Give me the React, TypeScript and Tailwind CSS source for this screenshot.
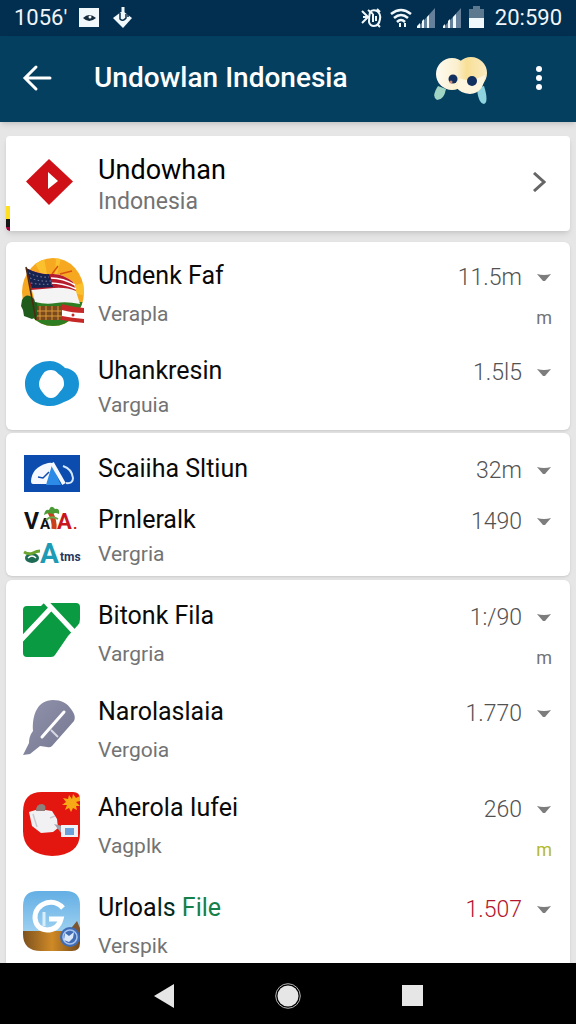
import type { ReactNode } from "react";
import clsx from "clsx";

const ICON = "block w-16 h-[68px] overflow-visible";

function FlagLogo() {
  return (
    <svg viewBox="22 260 64 68" className={ICON} aria-hidden="true">
      <defs>
        <clipPath id="flag-disc">
          <ellipse cx="53" cy="292" rx="31" ry="34" />
        </clipPath>
      </defs>
      <g clipPath="url(#flag-disc)">
        <rect x="20" y="256" width="68" height="72" fill="#f6a821" />
        <path d="M50 290 32 258h12zM54 288l2-30 5 0zM60 290l26-8v14z" fill="#fbc02d" />
        <path d="M52 274l6-8M60 274l12-3" stroke="#d9540f" strokeWidth="1.5" />
        <path d="M20 302h68v26H20z" fill="#2e7d22" />
        <path d="M36 306h26v14H36z" fill="#7a4a1c" />
      </g>
      <path d="M22 300q3-6 8-4l7 5 1 15-6 3-8-3-1-6-2-4z" fill="#1f5c1b" />
      <path d="M37 311h25M37 316h25M40 306v14M46 306v14M52 306v14M58 306v14" stroke="#d99a3a" />
      <path d="M26 268q14 7 25 6t22 8l7 22q-14-3-24-1t-21-1z" fill="#f4f4f4" />
      <path d="M26 268q14 7 25 6t22 8l3 9q-10-4-22-3t-23 2z" fill="#b71c2c" />
      <path d="M51 278q12 0 24 7M50 283q13 0 26 6" stroke="#fff" strokeWidth="1.5" fill="none" />
      <path d="M26 268q13 7 23 6l4 13q-12 1-21 1z" fill="#18224f" />
      <path d="M29 273q10 5 20 4M30 278q10 4 21 3M31 283q10 2 21 1" stroke="#8d93b5" strokeDasharray="1.5 2.5" fill="none" />
      <path d="M26 267l10 53" stroke="#4e2a12" strokeWidth="1.5" />
      <path d="M61 304q12 3 23 4v15q-12-1-22-3z" fill="#c62828" />
      <path d="M62 310q10 3 22 3v6q-12-1-22-3z" fill="#fff" />
      <circle cx="73" cy="315" r="1.5" fill="#c62828" />
    </svg>
  );
}

function RingLogo() {
  return (
    <svg viewBox="22 355 64 68" className={ICON} aria-hidden="true">
      <path
        d="M50 361c6 0 11 3 15 7 9 1 14 7 14 16 0 10-6 15-15 18-4 2-8 4-14 4-15 0-25-10-25-22s10-23 25-23z"
        fill="#1793d5"
      />
      <path d="M51 370c5 0 6 3 9 5s4 5 4 9-3 6-5 9-5 5-8 5-6-2-8-5-4-5-4-9 2-7 4-10 4-4 8-4z" fill="#fff" />
    </svg>
  );
}

function StackedLogos() {
  return (
    <svg viewBox="22 453 64 115" className="block w-16 h-[115px] overflow-visible font-[Roboto,sans-serif] font-bold" aria-hidden="true">
      <rect x="24" y="455" width="56" height="37" fill="#0b4cae" />
      <path d="M31 481q1-14 17-18 4-1 5 1l-6 20H33q-2 0-2-3z" fill="#f5f9ff" />
      <path d="M52 465l9 20H46z" fill="#2d8be8" />
      <path d="M52 463l12 21" stroke="#f5f9ff" strokeWidth="4" />
      <path d="M63 466q9 3 10 12 0 6-7 5" stroke="#d5e8fd" strokeWidth="2" fill="none" />
      <path d="M38 477l5 1 6-6" stroke="#0b4cae" strokeWidth="1.5" fill="none" />
      <text x="24" y="529" fontSize="23" fill="#111">V</text>
      <text x="40" y="529" fontSize="15" fill="#111">A</text>
      <text x="57" y="529" fontSize="22" fill="#c9151e">A</text>
      <text x="73" y="529" fontSize="15" fill="#c9151e">.</text>
      <path d="M50 512q5 9 4 17" stroke="#c9401c" strokeWidth="5" fill="none" />
      <path d="M44 515q1-6 5-5 2-6 6-1 5-1 4 5-4-2-6 0-5-2-9 1z" fill="#4a9a35" />
      <path d="M46 520q5-5 12-1" stroke="#6aa84a" strokeWidth="2" fill="none" />
      <ellipse cx="32" cy="558" rx="7" ry="5" fill="#1d6a55" />
      <path d="M24 552q5 3 9 1t7-2" stroke="#6aa32e" strokeWidth="3" fill="none" />
      <path d="M28 558q4-4 8 0" stroke="#fff" strokeWidth="1.5" fill="none" />
      <text x="40" y="563" fontSize="28" fill="#1d9bb5">A</text>
      <text x="60" y="561" fontSize="12" fill="#24365c">tms</text>
    </svg>
  );
}

function GreenLogo() {
  return (
    <svg viewBox="22 599 64 68" className={ICON} aria-hidden="true">
      <path d="M27 605h14l3-3h32q4 0 4 4v12q0 4-2 6l-10 11-13 19q-1 2-4 2H27q-4 0-4-4v-43q0-4 4-4z" fill="#0a9a41" />
      <path d="M21 639l31-33M45 600l30 32" stroke="#fff" strokeWidth="5" />
    </svg>
  );
}

function QuillLogo() {
  return (
    <svg viewBox="22 696 64 68" className={ICON} aria-hidden="true">
      <defs>
        <linearGradient id="quill" x1="0" y1="0" x2="1" y2="1">
          <stop offset="0" stopColor="#9293ae" />
          <stop offset="1" stopColor="#74778f" />
        </linearGradient>
      </defs>
      <path d="M53 700c8 0 14 3 18 9 3 4 5 8 3 12L52 746q-2 2-5 1l-7-1-10 8-7 1 6-12q0-7 4-12c-1-17 5-31 20-31z" fill="url(#quill)" />
      <path d="M42 737l22-25" stroke="#fff" strokeWidth="3" strokeLinecap="round" />
      <path d="M51 730l7 7" stroke="#d7d8e2" strokeWidth="2" />
    </svg>
  );
}

function RedLogo() {
  return (
    <svg viewBox="22 792 64 68" className={ICON} aria-hidden="true">
      <path d="M42 792h31q7 0 7 7v34q0 22-28 23-29-2-29-25v-19q0-20 19-20z" fill="#e3170f" />
      <path d="M69 795l3 4 1-5 3 4 4-2v5l-4 1 4 4h-4l1 4-4-2-2 4-2-4-4 2 2-5-5 0 4-3-3-4 5 1z" fill="#f7a916" />
      <path d="M29 812l10-3 13 2 5 8 1 9-5 4-12 1-9-7z" fill="#f1f1f4" />
      <path d="M36 811q0-7 6-7 5 1 3 7z" fill="#8d7f7c" />
      <path d="M33 814l4 13M50 818l5-2" stroke="#c9c9d1" strokeWidth="1.5" />
      <path d="M54 824l8 2v8z" fill="#9ea3ad" />
      <rect x="61" y="825" width="17" height="12" fill="#eef1f5" />
      <path d="M65 828h9v7h-9z" fill="#6ba0d8" />
    </svg>
  );
}

function GLogo() {
  return (
    <svg viewBox="22 893 64 68" className={ICON} aria-hidden="true">
      <defs>
        <linearGradient id="g-sky" x1="0" y1="0" x2="0" y2="1">
          <stop offset="0" stopColor="#62aee4" />
          <stop offset="1" stopColor="#9dd0f1" />
        </linearGradient>
        <linearGradient id="g-soil" x1="0" y1="0" x2="1" y2="0">
          <stop offset="0" stopColor="#7a4f1e" />
          <stop offset="0.5" stopColor="#cf8a26" />
          <stop offset="1" stopColor="#6e451a" />
        </linearGradient>
        <clipPath id="g-tile">
          <path d="M38 892h28q14 0 14 14v38q0 8-8 8H41q-18 0-18-17v-28q0-15 15-15z" />
        </clipPath>
      </defs>
      <g clipPath="url(#g-tile)">
        <rect x="22" y="891" width="60" height="42" fill="url(#g-sky)" />
        <rect x="22" y="932" width="60" height="22" fill="url(#g-soil)" />
        <path d="M68 933l9-11 5 12z" fill="#7d5530" />
      </g>
      <path d="M63 909q-7-8-17-5-11 4-11 15 1 11 12 12 11 0 14-11H49" stroke="#fff" strokeWidth="5" fill="none" />
      <path d="M44 913v14" stroke="#d9eefb" strokeWidth="3" />
      <circle cx="70" cy="938" r="10" fill="#3f6cb5" />
      <circle cx="70" cy="938" r="7" fill="none" stroke="#a9c5ee" strokeWidth="1.5" />
      <path d="M65 934l4 3 5-4-1 6-4 4-5-2z" fill="#dbe8fa" />
    </svg>
  );
}

function Caret({ label }: { label: string }) {
  return (
    <button type="button" aria-label={`Details for ${label}`} className="ml-3 flex h-8 w-5 items-center justify-center pt-1">
      <svg viewBox="0 0 16 10" className="h-2.5 w-4" aria-hidden="true">
        <path d="M1 1q7 2 14 0L9 8H7z" fill="#7d7d7d" />
      </svg>
    </button>
  );
}

type RowProps = {
  title: ReactNode;
  name: string;
  value: string;
  subtitle?: string;
  note?: string;
  noteClass?: string;
  valueClass?: string;
  tight?: boolean;
};

function Row({ title, name, value, subtitle, note, noteClass = "text-neutral-500", valueClass = "text-neutral-600", tight }: RowProps) {
  return (
    <div className="min-w-0 flex-1">
      <div className="flex items-center">
        <h2 className="min-w-0 flex-1 truncate text-[25px] leading-8 text-neutral-950">{title}</h2>
        <span className={clsx("pt-1 text-[23px] leading-7 font-light", valueClass)}>{value}</span>
        <Caret label={name} />
      </div>
      {subtitle && (
        <div className={clsx("flex justify-between", tight ? "mt-1" : "mt-2")}>
          <p className="text-[21px] leading-7 text-neutral-500">{subtitle}</p>
          {note && <span className={clsx("pt-2 pr-0.5 text-lg leading-5", noteClass)}>{note}</span>}
        </div>
      )}
    </div>
  );
}

const CARD = "rounded-md bg-white pl-4 pr-4 shadow-sm";
const LINE = "flex items-start gap-3";

function StatusBar() {
  return (
    <div className="flex h-9 items-center bg-[#022f4f] px-3.5 text-[22px] leading-8 text-slate-100">
      <span>1056′</span>
      <svg viewBox="80 6 54 22" className="ml-3 h-[22px] w-[54px]" aria-hidden="true">
        <rect x="80" y="7" width="20" height="19" fill="#f1f8fc" />
        <path d="M84 17q6-6 13 0-7 6-13 0z" fill="#132a3a" />
        <circle cx="91" cy="16" r="1.5" fill="#f1f8fc" />
        <path d="M114 17l8-6h3l8 6-9 10z" fill="#f1f8fc" />
        <path d="M124 5v14" stroke="#f1f8fc" strokeWidth="3" />
        <path d="M121 12v6q3 3 6-1v-4M129 12v4" stroke="#0a2d49" strokeWidth="1.5" fill="none" />
      </svg>
      <div className="flex-1" />
      <svg viewBox="361 4 124 24" className="mr-2.5 h-6 w-[124px]" aria-hidden="true">
        <g stroke="#f1f8fc" fill="none" strokeWidth="2">
          <path d="M362 9l6 6M368 15l-6 6M363 15h6" />
          <path d="M370 10q3-3 7-1 4 3 3 8-1 7-6 7-4 0-5-4 0-6 1-10zM368 8l5 4M377 7l3 3M373 12v8M376 14v5M377 22l3 3" />
          <path d="M391 12q10-8 20 0M394 16q7-6 14 0M397 20q4-4 8 0" strokeWidth="2.5" />
          <path d="M400 21v4M405 21v4" />
        </g>
        <path d="M435 6v20h-18z" fill="#64809a" />
        <path d="M417 26v-2l3-3v5zM422 26v-7l2-2v9zM427 26V15l2-2v13z" fill="#f1f8fc" />
        <path d="M461 6v20h-18z" fill="#64809a" />
        <path d="M443 26v-2l2-2v4zM448 26v-7l2-2v9zM453 26V15l3-3v14z" fill="#f1f8fc" />
        <path d="M469 7h4V4h7v3h4v10h-15z" fill="#5c7990" />
        <path d="M469 16h15v10h-15z" fill="#f1f8fc" />
      </svg>
      <span>20:590</span>
    </div>
  );
}

function AppBar() {
  return (
    <header className="relative z-10 flex h-[86px] items-center bg-[#053f60] pb-0.5 pl-5 pr-7 text-white shadow-md">
      <button type="button" aria-label="Back" className="flex h-12 w-9 items-center">
        <svg viewBox="0 0 32 28" className="h-7 w-8" fill="none" stroke="currentColor" strokeWidth="3" aria-hidden="true">
          <path d="M30 14H6M16 3L5 14l11 11" strokeLinecap="round" />
        </svg>
      </button>
      <h1 className="ml-[38px] min-w-0 flex-1 truncate text-[28px] leading-9 font-medium">Undowlan Indonesia</h1>
      <svg viewBox="432 52 56 52" className="mr-[42px] h-[52px] w-14" aria-hidden="true">
        <defs>
          <linearGradient id="eyes" gradientUnits="userSpaceOnUse" x1="436" y1="0" x2="487" y2="0">
            <stop offset="0" stopColor="#fdfaf0" />
            <stop offset="0.4" stopColor="#fbf0cf" />
            <stop offset="0.6" stopColor="#f8df96" />
            <stop offset="1" stopColor="#f9ebc0" />
          </linearGradient>
        </defs>
        <path d="M438 86l8 3q-2 11-9 11-6-3 1-14z" fill="#9fd3c3" />
        <path d="M477 88l7-2q5 16 0 18-6-1-7-16z" fill="#8ed4de" />
        <circle cx="452" cy="74" r="16" fill="url(#eyes)" />
        <circle cx="471" cy="73" r="16" fill="url(#eyes)" />
        <path d="M459 78q11 5 26-3-1 18-15 19-10-1-13-6z" fill="#fdf5de" />
        <circle cx="453" cy="79" r="4.5" fill="#11305f" />
        <circle cx="472" cy="81" r="5" fill="#11305f" />
        <circle cx="451" cy="82" r="1.5" fill="#c98a7c" />
      </svg>
      <button type="button" aria-label="More options" className="flex h-12 w-[18px] items-center justify-center">
        <svg viewBox="0 0 6 26" className="h-[26px] w-1.5 overflow-visible" fill="currentColor" aria-hidden="true">
          <circle cx="3" cy="4" r="3" />
          <circle cx="3" cy="13" r="3" />
          <circle cx="3" cy="22" r="3" />
        </svg>
      </button>
    </header>
  );
}

function NavBar() {
  return (
    <nav className="relative z-10 flex h-[61px] shrink-0 items-center bg-black px-[102px]">
      <button type="button" aria-label="Back" className="flex h-12 flex-1 items-center justify-center pt-1">
        <svg viewBox="0 0 20 24" className="h-6 w-5" aria-hidden="true">
          <path d="M20 0v24L0 12z" fill="#e6e6e6" />
        </svg>
      </button>
      <button type="button" aria-label="Home" className="flex h-12 flex-1 items-center justify-center pt-1">
        <svg viewBox="0 0 26 26" className="size-[26px]" aria-hidden="true">
          <circle cx="13" cy="13" r="12.3" fill="none" stroke="#b5b5b5" />
          <circle cx="13" cy="13" r="10.5" fill="#e6e6e6" />
        </svg>
      </button>
      <button type="button" aria-label="Recent apps" className="flex h-12 flex-1 items-center justify-center pt-1">
        <span className="size-[21px] bg-[#e6e6e6]" />
      </button>
    </nav>
  );
}

export default function App() {
  return (
    <div className="flex h-screen flex-col overflow-hidden bg-[#e6e6e7] font-[Roboto,sans-serif]">
      <StatusBar />
      <AppBar />

      <main className="min-h-0 flex-1 overflow-hidden px-1.5 pt-3.5">
        <a href="#indonesia" className="relative flex h-[95px] items-start gap-3 overflow-hidden rounded bg-white pt-3.5 pl-4 pr-6 shadow-md">
          <span className="absolute bottom-0 left-0 h-[25px] w-1 rounded-bl border-b-4 border-b-rose-800 bg-linear-to-b from-yellow-300 from-60% to-neutral-900 to-60%" />
          <svg viewBox="22 150 64 64" className="size-16" aria-hidden="true">
            <path d="M49 159l24 22.500-24 23.500-23-23.500z" fill="#cf1017" />
            <path d="M48 172l10 9-10 8z" fill="#fff" />
          </svg>
          <div className="min-w-0 flex-1 pt-1">
            <h2 className="text-[27px] leading-8 text-black">Undowhan</h2>
            <p className="text-[23px] leading-8 text-neutral-500">Indonesia</p>
          </div>
          <div className="flex h-16 items-center">
            <svg viewBox="0 0 14 20" className="h-5 w-3.5" fill="none" stroke="#666" strokeWidth="3" aria-hidden="true">
              <path d="M2 1l10 9-10 9" />
            </svg>
          </div>
        </a>

        <section className={clsx(CARD, "mt-[11px] pt-[18px] pb-2.5")}>
          <div className={LINE}>
            <FlagLogo />
            <Row name="Undenk Faf" title="Undenk Faf" value="11.5m" subtitle="Verapla" note="m" />
          </div>
          <div className={clsx(LINE, "mt-[27px] h-[65px]")}>
            <RingLogo />
            <Row name="Uhankresin" title="Uhankresin" value="1.5l5" subtitle="Varguia" tight />
          </div>
        </section>

        <section className={clsx(CARD, "mt-[3px] flex items-start gap-3 pt-5 pb-2")}>
          <StackedLogos />
          <div className="flex min-w-0 flex-1 flex-col gap-[19px]">
            <Row name="Scaiiha Sltiun" title="Scaiiha Sltiun" value="32m" />
            <Row name="Prnleralk" title="Prnleralk" value="1490" subtitle="Vergria" tight />
          </div>
        </section>

        <section className={clsx(CARD, "mt-1 flex flex-col gap-7 pt-5 pb-7")}>
          <div className={LINE}>
            <GreenLogo />
            <Row name="Bitonk Fila" title="Bitonk Fila" value="1:/90" subtitle="Vargria" note="m" />
          </div>
          <div className={LINE}>
            <QuillLogo />
            <Row name="Narolaslaia" title="Narolaslaia" value="1.770" subtitle="Vergoia" />
          </div>
          <div className={LINE}>
            <RedLogo />
            <Row name="Aherola Iufei" title="Aherola Iufei" value="260" subtitle="Vagplk" note="m" noteClass="text-[#b5b92a]" />
          </div>
          <div className={clsx(LINE, "pt-1")}>
            <GLogo />
            <Row
              name="Urloals File"
              title={
                <>
                  Urloa<span className="text-emerald-950">ls</span> <span className="text-[#16804a]">File</span>
                </>
              }
              value="1.507"
              valueClass="text-[#b3142e]"
              subtitle="Verspik"
            />
          </div>
        </section>
      </main>

      <NavBar />
    </div>
  );
}
